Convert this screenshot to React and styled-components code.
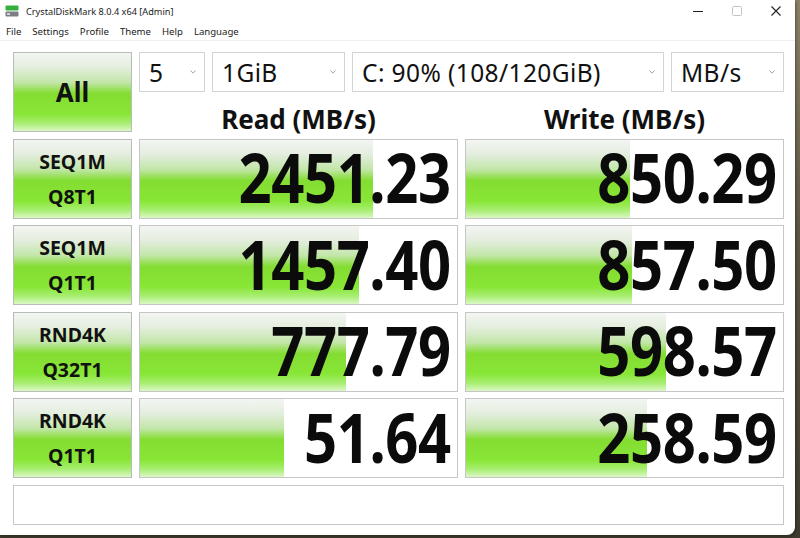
import React from 'react';
import styled, { createGlobalStyle } from 'styled-components';

const GlobalStyle = createGlobalStyle`
  html, body {
    margin: 0;
    padding: 0;
  }
  body {
    width: 800px;
    height: 538px;
    overflow: hidden;
    background: linear-gradient(180deg, #8a8168 0%, #5b5442 45%, #3f3a2e 100%);
    font-family: 'Noto Sans', 'Open Sans', sans-serif;
  }
`;

const BAR = `linear-gradient(
  180deg,
  #f3f5f2 0%,
  #e4eedf 18%,
  #c2e6a8 38%,
  #98e05a 47%,
  #84dd32 52%,
  #88e636 78%,
  #a8ee72 90%,
  #dcf7c6 100%
)`;

const Window = styled.div`
  width: 795px;
  height: 535px;
  background: #ffffff;
  border-radius: 0 0 8px 0;
  box-shadow: 1px 1px 3px rgba(0, 0, 0, 0.35);
  display: flex;
  flex-direction: column;
  overflow: hidden;
`;

const TitleBar = styled.div`
  flex-shrink: 0;
  height: 22px;
  display: flex;
  align-items: center;
  padding-left: 5px;
  font-size: 9.2px;
  color: #1b1b1b;
`;

const TitleText = styled.span`
  margin-left: 7px;
  flex: 1;
`;

const Caption = styled.div`
  display: flex;
  align-items: center;
  height: 22px;
`;

const CaptionButton = styled.div`
  width: 39px;
  height: 22px;
  display: flex;
  align-items: center;
  justify-content: center;
  color: ${(p) => (p.$disabled ? '#c4c4c4' : '#202020')};
`;

const MenuBar = styled.div`
  flex-shrink: 0;
  height: 18px;
  display: flex;
  align-items: center;
  gap: 11px;
  padding-left: 6px;
  font-size: 9.6px;
  color: #1b1b1b;
  border-bottom: 1px solid #f0f0f0;
`;

const Board = styled.div`
  display: grid;
  grid-template-columns: 119px 319px 319px;
  grid-template-rows: repeat(5, 80px) 40px;
  column-gap: 7px;
  row-gap: 6.5px;
  padding: 11px 0 0 13px;
`;

const GreenButton = styled.div`
  box-sizing: border-box;
  border: 1px solid #b9bdb7;
  background: ${BAR};
  display: flex;
  flex-direction: column;
  align-items: center;
  justify-content: center;
  font-weight: 700;
  color: #111;
  font-size: ${(p) => (p.$big ? '26px' : '19.5px')};
  line-height: ${(p) => (p.$big ? '1' : '35px')};
`;

const Controls = styled.div`
  grid-column: 2 / 4;
  display: flex;
  flex-direction: column;
`;

const ComboRow = styled.div`
  display: flex;
  gap: 7px;
  height: 40px;
`;

const Combo = styled.div`
  box-sizing: border-box;
  width: ${(p) => p.$w}px;
  height: 40px;
  border: 1px solid #d3d3d3;
  background: #fff;
  display: flex;
  align-items: center;
  padding: 0 8px 0 9px;
  font-size: 24.5px;
  letter-spacing: 0.4px;
  color: #111;
`;

const ComboText = styled.span`
  flex: 1;
  white-space: nowrap;
`;

const HeaderRow = styled.div`
  display: grid;
  grid-template-columns: 319px 319px;
  column-gap: 7px;
  height: 40px;
`;

const Header = styled.div`
  box-sizing: border-box;
  display: flex;
  align-items: center;
  justify-content: center;
  font-size: 26px;
  font-weight: 700;
  color: #111;
  padding-top: 13px;
  line-height: 1;
`;

const Cell = styled.div`
  position: relative;
  box-sizing: border-box;
  border: 1px solid #c6c6c6;
  background: #fff;
  display: flex;
  align-items: center;
  justify-content: flex-end;
  padding-right: 6px;
`;

const Fill = styled.div`
  position: absolute;
  left: 0;
  top: 0;
  bottom: 0;
  background: ${BAR};
`;

const Value = styled.span`
  position: relative;
  font-size: 69px;
  font-weight: 700;
  color: #0b0b0b;
  letter-spacing: -0.5px;
  transform: scaleX(0.84);
  transform-origin: right center;
  line-height: 1;
  margin-top: -4px;
  white-space: nowrap;
`;

const Comment = styled.div`
  grid-column: 1 / 4;
  box-sizing: border-box;
  border: 1px solid #c6c6c6;
  background: #fff;
`;

const Chevron = () => (
  <svg width="6" height="4" viewBox="0 0 6 4">
    <path d="M0.5 0.5 L3 3.2 L5.5 0.5" fill="none" stroke="#9a9a9a" strokeWidth="0.9" />
  </svg>
);

const AppIcon = () => (
  <svg width="14" height="12" viewBox="0 0 14 12">
    <rect x="0.5" y="0.5" width="13" height="5" rx="1" fill="#35b03c" />
    <rect x="0.5" y="6.5" width="13" height="5" rx="1" fill="#7b7f84" />
    <rect x="2" y="8.3" width="3" height="1.6" fill="#e8e8e8" />
  </svg>
);

const menu = ['File', 'Settings', 'Profile', 'Theme', 'Help', 'Language'];

const combos = [
  { w: 66, text: '5' },
  { w: 133, text: '1GiB' },
  { w: 312, text: 'C: 90% (108/120GiB)' },
  { w: 113, text: 'MB/s' },
];

const results = [
  { top: 'SEQ1M', bottom: 'Q8T1', read: '2451.23', readPct: 73.5, write: '850.29', writePct: 51.8 },
  { top: 'SEQ1M', bottom: 'Q1T1', read: '1457.40', readPct: 69, write: '857.50', writePct: 52.4 },
  { top: 'RND4K', bottom: 'Q32T1', read: '777.79', readPct: 65, write: '598.57', writePct: 63 },
  { top: 'RND4K', bottom: 'Q1T1', read: '51.64', readPct: 45.3, write: '258.59', writePct: 57 },
];

const ResultCell = ({ value, pct }) => (
  <Cell>
    <Fill style={{ width: `${pct}%` }} />
    <Value>{value}</Value>
  </Cell>
);

export default function App() {
  return (
    <>
      <GlobalStyle />
      <Window>
        <TitleBar>
          <AppIcon />
          <TitleText>CrystalDiskMark 8.0.4 x64 [Admin]</TitleText>
          <Caption>
            <CaptionButton>
              <svg width="10" height="10" viewBox="0 0 10 10">
                <path d="M0 5.5 H10" stroke="currentColor" strokeWidth="1" />
              </svg>
            </CaptionButton>
            <CaptionButton $disabled>
              <svg width="10" height="10" viewBox="0 0 10 10">
                <rect x="0.5" y="0.5" width="9" height="9" rx="1" fill="none" stroke="currentColor" />
              </svg>
            </CaptionButton>
            <CaptionButton>
              <svg width="10" height="10" viewBox="0 0 10 10">
                <path d="M0.5 0.5 L9.5 9.5 M9.5 0.5 L0.5 9.5" stroke="currentColor" strokeWidth="1.1" />
              </svg>
            </CaptionButton>
          </Caption>
        </TitleBar>
        <MenuBar>
          {menu.map((m) => (
            <span key={m}>{m}</span>
          ))}
        </MenuBar>
        <Board>
          <GreenButton $big>All</GreenButton>
          <Controls>
            <ComboRow>
              {combos.map((c) => (
                <Combo key={c.text} $w={c.w}>
                  <ComboText>{c.text}</ComboText>
                  <Chevron />
                </Combo>
              ))}
            </ComboRow>
            <HeaderRow>
              <Header>Read (MB/s)</Header>
              <Header>Write (MB/s)</Header>
            </HeaderRow>
          </Controls>
          {results.map((r, i) => (
            <React.Fragment key={i}>
              <GreenButton>
                <span>{r.top}</span>
                <span>{r.bottom}</span>
              </GreenButton>
              <ResultCell value={r.read} pct={r.readPct} />
              <ResultCell value={r.write} pct={r.writePct} />
            </React.Fragment>
          ))}
          <Comment />
        </Board>
      </Window>
    </>
  );
}
